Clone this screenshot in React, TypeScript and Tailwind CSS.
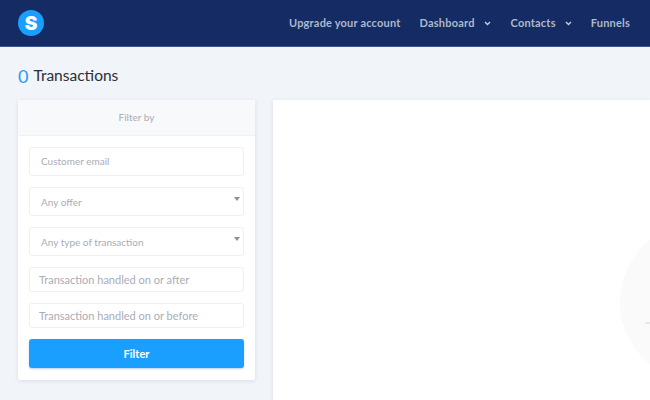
import React from "react";

const Chevron = () => (
  <svg width="7" height="5" viewBox="0 0 7 5" fill="none" stroke="#c5cede" strokeWidth="1.4" className="ml-[9px]">
    <path d="M1 1l2.5 2.5L6 1" />
  </svg>
);

const Field = ({ label, select, h = "h-[29px]", pad = "pl-[11px]", text = "text-[10px]", nudge }: { label: string; select?: boolean; h?: string; pad?: string; text?: string; nudge?: boolean }) => (
  <div className={`relative ${h} ${pad} ${text} ${select || nudge ? "pt-[1px]" : ""} flex items-center bg-white border border-[#eef0f4] rounded-[3px] text-[#a9adb5]`}>
    <span>{label}</span>
    {select && <span className="absolute right-[3px] top-[9px] w-0 h-0 border-l-[3px] border-r-[3px] border-t-[4px] border-l-transparent border-r-transparent border-t-[#8a8f98]" />}
  </div>
);

export default function App() {
  return (
    <div className="w-[650px] h-[400px] overflow-hidden bg-[#f1f4f9] flex flex-col font-['Lato','Open_Sans',sans-serif]">
      <header className="h-[47px] shrink-0 bg-[#142c63] border-b border-[#3d5590] flex items-center justify-between pl-[18px] pr-[20px]">
        <div className="w-[26px] h-[26px] rounded-full bg-[#1a9fff] flex items-center justify-center text-white font-black font-['Inter',sans-serif] text-[19px] leading-none">S</div>
        <nav className="flex items-center text-[11px] font-bold tracking-[0.2px] text-[#aeb8cc]">
          <span className="mr-[19px]">Upgrade your account</span>
          <span className="flex items-center mr-[20px]">Dashboard<Chevron /></span>
          <span className="flex items-center mr-[19px]">Contacts<Chevron /></span>
          <span>Funnels</span>
        </nav>
      </header>

      <main className="flex-1 min-h-0 pl-[18px] flex flex-col">
        <h1 className="h-[53px] shrink-0 flex items-center text-[15.5px] text-[#2b2f38] pt-[5px]">
          <span className="text-[#2a9bf4] text-[18px] mr-[5px]">0</span>Transactions
        </h1>
        <div className="flex-1 min-h-0 flex items-start gap-[18px]">
          <aside className="w-[237px] h-[280px] shrink-0 bg-white rounded-[2px] shadow-[0_1px_4px_rgba(40,60,100,0.12)]">
            <div className="h-[36px] bg-[#f7f9fb] border-b border-[#eef1f5] flex items-center justify-center text-[10px] text-[#a9adb5]">Filter by</div>
            <div className="px-[11px] pt-[11px] flex flex-col">
              <Field label="Customer email" />
              <div className="h-[11px]" />
              <Field label="Any offer" select />
              <div className="h-[11px]" />
              <Field label="Any type of transaction" select />
              <div className="h-[11px]" />
              <Field label="Transaction handled on or after" h="h-[25px]" pad="pl-[9px]" text="text-[11px]" nudge />
              <div className="h-[11px]" />
              <Field label="Transaction handled on or before" h="h-[25px]" pad="pl-[9px]" text="text-[11px]" nudge />
              <div className="h-[11px]" />
              <button className="h-[29px] pt-[1px] rounded-[3px] bg-[#1a9fff] text-white text-[11px] font-bold shadow-[0_1px_2px_rgba(20,100,200,0.3)]">Filter</button>
            </div>
          </aside>
          <section className="relative flex-1 self-stretch bg-white shadow-[0_1px_4px_rgba(40,60,100,0.12)] overflow-hidden">
            <div className="absolute left-[347px] top-[122px] w-[160px] h-[160px] rounded-full bg-[#fafafa]" />
            <div className="absolute left-[372px] top-[222px] w-[10px] h-[2px] bg-[#e8e8e8]" />
          </section>
        </div>
      </main>
    </div>
  );
}
